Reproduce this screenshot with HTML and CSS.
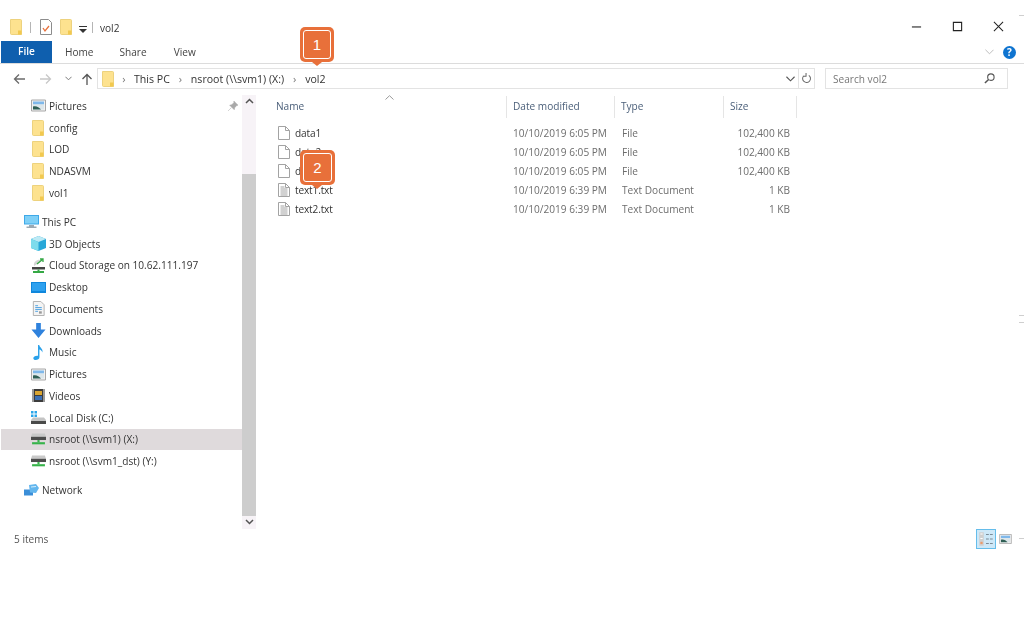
FILE: index.html
```html
<!DOCTYPE html>
<html lang="en">
<head>
    <meta charset="UTF-8">
    <title>vol2</title>
    <link rel="stylesheet" href="styles.css">
</head>
<body>
    <svg class="defs" width="0" height="0">
        <symbol id="folder" viewBox="0 0 12 16">
            <path d="M.5.5h10.2c.4 0 .8.4.8.8v14.2H1.3c-.4 0-.8-.4-.8-.8z" fill="#fde28f" stroke="#edd27e"/>
            <path d="M8 11.5h3.5v4H8z" fill="#f2c94f"/>
        </symbol>
        <symbol id="file" viewBox="0 0 12 14">
            <path d="M.5.5h7l4 4v9H.5z" fill="#fff" stroke="#a3a3a3"/>
            <path d="M7.5.5v4h4" fill="none" stroke="#a3a3a3"/>
        </symbol>
        <symbol id="textfile" viewBox="0 0 12 14">
            <path d="M.5.5h7l4 4v9H.5z" fill="#fff" stroke="#a3a3a3"/>
            <path d="M7.5.5v4h4M2.5 4h4M2.500 6h7M2.500 8h7M2.500 10h7M2.500 12h7" fill="none" stroke="#a3a3a3"/>
        </symbol>
        <symbol id="picture" viewBox="0 0 15 12">
            <path d="M.5.5h14v11H.5z" fill="#f2f2f2" stroke="#a8a8a8"/>
            <path d="M2 2h11v3H2z" fill="#7fb8ea"/>
            <path d="M2 5h11v5H2z" fill="#dce6ea"/>
            <path d="M2 10V7c3-1 6 .5 8 3z" fill="#2f5f55"/>
        </symbol>
        <symbol id="netdrive" viewBox="0 0 14 11">
            <path d="M1 0h12l1 3v2H0V3z" fill="#c9c9c9"/>
            <path d="M0 3h14v3H0z" fill="#4d4d4d"/>
            <path d="M6 6h2v2H6z" fill="#36b34a"/>
            <path d="M1 8h12v2H1z" fill="#36b34a"/>
        </symbol>
    </svg>

    <div class="window">
        <!-- Title bar -->
        <header class="titlebar">
            <svg class="qa-folder"><use href="#folder"/></svg>
            <span class="qa-sep"></span>
            <svg class="qa-props" viewBox="0 0 12 16">
                <path d="M.5.5h8l3 3v12H.5z" fill="#fff" stroke="#8c8c8c"/>
                <path d="M3 9l2 3 4-5" fill="none" stroke="#e8703a" stroke-width="1.3"/>
            </svg>
            <svg class="qa-folder qa-folder2"><use href="#folder"/></svg>
            <svg class="qa-down" viewBox="0 0 8 7"><path d="M0 0h8v1H0zM0 3h8L4 7z" fill="#333"/></svg>
            <span class="qa-sep"></span>
            <span class="title">vol2</span>
            <div class="win-buttons">
                <svg viewBox="0 0 12 12"><path d="M1 6.5h10" stroke="#222" stroke-width="1.2"/></svg>
                <svg viewBox="0 0 12 12"><path d="M1.500 1.500h9v9h-9z" fill="none" stroke="#222" stroke-width="1.2"/></svg>
                <svg viewBox="0 0 12 12"><path d="M1 1l10 10M11 1L1 11" stroke="#222" stroke-width="1.1"/></svg>
            </div>
        </header>

        <!-- Ribbon tabs -->
        <nav class="tabs">
            <a class="tab-file">File</a>
            <a class="tab tab-home">Home</a>
            <a class="tab tab-share">Share</a>
            <a class="tab tab-view">View</a>
            <svg class="ribbon-chevron" viewBox="0 0 10 6"><path d="M.5.5L5 5 9.500.5" fill="none" stroke="#b5b5b5"/></svg>
            <span class="help">?</span>
        </nav>

        <!-- Address row -->
        <div class="addressrow">
            <div class="arrows">
                <svg class="arrow arrow-back" viewBox="0 0 12 12"><path d="M12 6H1.500M6 1.500L1.500 6 6 10.500" fill="none" stroke="#6b6b6b" stroke-width="1.3"/></svg>
                <svg class="arrow arrow-forward" viewBox="0 0 12 12"><path d="M0 6h10.500M6 1.500L10.500 6 6 10.500" fill="none" stroke="#c8c8c8" stroke-width="1.3"/></svg>
                <svg class="arrow-small" viewBox="0 0 8 5"><path d="M.5.5L4 4 7.500.5" fill="none" stroke="#777" stroke-width="1.1"/></svg>
                <svg class="arrow" viewBox="0 0 12 12"><path d="M6 12V1.500M1.500 6L6 1.500 10.500 6" fill="none" stroke="#555" stroke-width="1.3"/></svg>
            </div>
            <div class="addressbar">
                <svg class="crumb-folder"><use href="#folder"/></svg>
                <span class="crumb-sep crumb-sep-first">›</span>
                <span class="crumb">This PC</span>
                <span class="crumb-sep">›</span>
                <span class="crumb">nsroot (\\svm1) (X:)</span>
                <span class="crumb-sep">›</span>
                <span class="crumb">vol2</span>
                <svg class="address-drop" viewBox="0 0 10 6"><path d="M.5.5L5 5 9.500.5" fill="none" stroke="#555" stroke-width="1.2"/></svg>
                <span class="refresh">
                    <svg viewBox="0 0 12 12"><path d="M3 3a4.300 4.300 0 1 0 5.500-.5M5.500 0v3.500H2" fill="none" stroke="#666" stroke-width="1.1"/></svg>
                </span>
            </div>
            <div class="searchbox">
                <span>Search vol2</span>
                <svg viewBox="0 0 12 12"><circle cx="7.5" cy="4.5" r="3.5" fill="none" stroke="#555" stroke-width="1.2"/><path d="M5 7l-4 4" stroke="#555" stroke-width="1.6"/></svg>
            </div>
        </div>

        <div class="main">
            <!-- Navigation pane -->
            <aside class="navpane">
                <ul class="tree">
                    <li class="pinned">
                        <svg class="ico"><use href="#picture"/></svg>Pictures
                        <svg class="pin" viewBox="0 0 12 12"><path d="M7 0l5 5-1.500.5L8 8l-.5 2.500L2 5l2.500-.5L7 2zM4 8l-4 4" fill="#a9a9a9" stroke="#a9a9a9" stroke-width=".6"/></svg>
                    </li>
                    <li><svg class="ico ico-folder"><use href="#folder"/></svg>config</li>
                    <li><svg class="ico ico-folder"><use href="#folder"/></svg>LOD</li>
                    <li><svg class="ico ico-folder"><use href="#folder"/></svg>NDASVM</li>
                    <li><svg class="ico ico-folder"><use href="#folder"/></svg>vol1</li>
                    <li class="root group-start">
                        <svg class="ico" viewBox="0 0 15 13"><path d="M0 0h15v9.500H0z" fill="#3fa9e8"/><path d="M1 1h13v7.500H1z" fill="#7fd0f7"/><path d="M5 10h5v1.500h2.500V13h-10v-1.500H5z" fill="#9ba9b3"/></svg>This PC
                    </li>
                    <li><svg class="ico" viewBox="0 0 15 15"><path d="M7.500 0L15 3v9l-7.500 3L0 12V3z" fill="#27a7d8"/><path d="M7.500 0L15 3 7.500 6 0 3z" fill="#bdeaf5"/><path d="M0 3l7.500 3v9L0 12z" fill="#7ddcec"/></svg>3D Objects</li>
                    <li><svg class="ico" viewBox="0 0 15 15"><path d="M3 8a5 5 0 0 1 8-5z" fill="#d5d5d5"/><path d="M6 6l6-5M9 1h3v3" fill="none" stroke="#35a845" stroke-width="1.3"/><path d="M1 9h13v2.500H1z" fill="#444"/><path d="M6.500 11.500h2V13h-2z" fill="#35a845"/><path d="M2 13h11v2H2z" fill="#35a845"/></svg>Cloud Storage on 10.62.111.197</li>
                    <li><svg class="ico" viewBox="0 0 15 11"><path d="M0 0h15v11H0z" fill="#0f87dc"/><path d="M1 1h13v8H1z" fill="#2ea1ef"/></svg>Desktop</li>
                    <li><svg class="ico" viewBox="0 0 15 16"><path d="M2 .5h8l3.500 3.500v11.500H2z" fill="#f4f4f4" stroke="#aeaeae"/><path d="M4 5h3M4 7h7M4 9h7M4 11h3" stroke="#4a9fe0"/><path d="M8 11h3v2.500H8z" fill="#9a9a9a"/></svg>Documents</li>
                    <li><svg class="ico" viewBox="0 0 15 16"><path d="M5 0h5v7h5l-7.500 9L0 7h5z" fill="#2f82dd"/></svg>Downloads</li>
                    <li><svg class="ico" viewBox="0 0 15 16"><path d="M7 0h1.300c.3 3 4.700 4 3.200 8-.3-2-1.800-3-3-3.300V13c0 1.800-2 3-4 3-1.500 0-2.500-.8-2.500-2 0-1.500 2-2.800 5-2.500z" fill="#2aa1ea"/></svg>Music</li>
                    <li><svg class="ico"><use href="#picture"/></svg>Pictures</li>
                    <li><svg class="ico" viewBox="0 0 15 15"><path d="M1 1h13v13H1z" fill="#3c3c3c"/><path d="M4 3h7v4H4z" fill="#d9a532"/><path d="M4 8h7v4H4z" fill="#3b6fb5"/><path d="M1 1h2v13H1zM12 1h2v13h-2z" fill="#9a9a9a"/></svg>Videos</li>
                    <li><svg class="ico" viewBox="0 0 15 13"><path d="M0 0h2.500v2.500H0zM3.500 0H6v2.500H3.500zM0 3.500h2.500V6H0zM3.500 3.500H6V6H3.500z" fill="#2ba6ea"/><path d="M2 6.500h11L15 9v4H0V9z" fill="#c4c4c4"/><path d="M0 10h15v3H0z" fill="#4a4a4a"/></svg>Local Disk (C:)</li>
                    <li class="selected"><svg class="ico"><use href="#netdrive"/></svg>nsroot (\\svm1) (X:)</li>
                    <li><svg class="ico"><use href="#netdrive"/></svg>nsroot (\\svm1_dst) (Y:)</li>
                    <li class="root group-start">
                        <svg class="ico" viewBox="0 0 15 13"><path d="M0 5.500h9v6H0z" fill="#3b8ed8"/><path d="M5 1l7-1 3 4-3 5-6-.5z" fill="#63b6ee"/><path d="M7 3l5-.5" stroke="#d3eefc"/></svg>Network
                    </li>
                </ul>
            </aside>

            <div class="scrollbar">
                <svg class="scroll-arrow" viewBox="0 0 9 6"><path d="M1 5l3.500-3.500L8 5" fill="none" stroke="#555" stroke-width="1.5"/></svg>
                <div class="scroll-track"><div class="scroll-thumb"></div></div>
                <svg class="scroll-arrow" viewBox="0 0 9 6"><path d="M1 1l3.500 3.500L8 1" fill="none" stroke="#555" stroke-width="1.5"/></svg>
            </div>

            <!-- File list -->
            <section class="filelist">
                <svg class="sort-arrow" viewBox="0 0 9 5"><path d="M.5 4.500L4.500.7l4 3.800" fill="none" stroke="#9a9a9a"/></svg>
                <div class="columns">
                    <div class="col col-name">Name</div>
                    <div class="col col-date">Date modified</div>
                    <div class="col col-type">Type</div>
                    <div class="col col-size">Size</div>
                </div>
                <div class="row">
                    <div class="cell-name"><svg class="file-ico"><use href="#file"/></svg>data1</div>
                    <div class="cell cell-date">10/10/2019 6:05 PM</div>
                    <div class="cell cell-type">File</div>
                    <div class="cell cell-size">102,400 KB</div>
                </div>
                <div class="row">
                    <div class="cell-name"><svg class="file-ico"><use href="#file"/></svg>data2</div>
                    <div class="cell cell-date">10/10/2019 6:05 PM</div>
                    <div class="cell cell-type">File</div>
                    <div class="cell cell-size">102,400 KB</div>
                </div>
                <div class="row">
                    <div class="cell-name"><svg class="file-ico"><use href="#file"/></svg>data3</div>
                    <div class="cell cell-date">10/10/2019 6:05 PM</div>
                    <div class="cell cell-type">File</div>
                    <div class="cell cell-size">102,400 KB</div>
                </div>
                <div class="row">
                    <div class="cell-name"><svg class="file-ico"><use href="#textfile"/></svg>text1.txt</div>
                    <div class="cell cell-date">10/10/2019 6:39 PM</div>
                    <div class="cell cell-type">Text Document</div>
                    <div class="cell cell-size">1 KB</div>
                </div>
                <div class="row">
                    <div class="cell-name"><svg class="file-ico"><use href="#textfile"/></svg>text2.txt</div>
                    <div class="cell cell-date">10/10/2019 6:39 PM</div>
                    <div class="cell cell-type">Text Document</div>
                    <div class="cell cell-size">1 KB</div>
                </div>
            </section>
        </div>

        <!-- Status bar -->
        <footer class="statusbar">
            <span>5 items</span>
            <div class="views">
                <span class="view-details">
                    <svg viewBox="0 0 16 16"><path d="M2 2h4v12H2z" fill="#cfcfcf"/><path d="M3 3.500h2M3 7.500h2" stroke="#fff"/><path d="M3 10.500h2v2H3z" fill="#eb9a6c"/><path d="M8 4h2.500M11.500 4H14M8 8h2.500M11.500 8H14M8 12h2.500M11.500 12H14" stroke="#7a8a96"/></svg>
                </span>
                <svg class="view-large"><use href="#picture"/></svg>
            </div>
        </footer>
    </div>

    <!-- Window edge marks -->
    <span class="edge edge-top"></span>
    <span class="edge edge-mid"></span>
    <span class="edge edge-low"></span>
    <span class="edge edge-status"></span>

    <!-- Callouts -->
    <div class="callout callout-1"><span>1</span></div>
    <div class="callout callout-2"><span>2</span></div>
</body>
</html>
```

FILE: styles.css
```css
body {
    margin: 0;
    background: white;
    font-family: 'Open Sans', 'Noto Sans', sans-serif;
    font-size: 10.1px;
    color: #333;
    overflow: hidden;
}

.defs {
    position: absolute;
}

.window {
    width: 1024px;
    height: 634px;
    filter: blur(0.45px);
}

/* Title bar */
.titlebar {
    height: 41px;
    padding: 19px 0 0 10px;
    box-sizing: border-box;
    display: flex;
    align-items: flex-start;
}

.qa-folder {
    width: 12px;
    height: 16px;
}

.qa-folder2 {
    margin-left: 8px;
}

.qa-sep {
    width: 1px;
    height: 11px;
    margin: 3px 9px 0 8px;
    background: #b5b5b5;
}

.qa-props {
    width: 12px;
    height: 16px;
}

.qa-down {
    width: 8px;
    height: 7px;
    margin: 7px -3px 0 7px;
}

.title {
    line-height: 18px;
    margin-left: -2px;
}

.win-buttons {
    margin-left: auto;
    display: flex;
    gap: 30px;
    padding: 2px 20px 0 0;
}

.win-buttons svg {
    width: 11px;
    height: 11px;
}

/* Ribbon tabs */
.tabs {
    height: 22px;
    display: flex;
    align-items: center;
    border-bottom: 1px solid #dcdcdc;
    padding-left: 1px;
    position: relative;
}

.tab-file {
    width: 51px;
    height: 22px;
    line-height: 21px;
    text-align: center;
    background: #0f5fae;
    color: white;
    font-weight: 600;
}

.tab {
    color: #444;
}

.tab-home { margin-left: 13px; }
.tab-share { margin-left: 26px; }
.tab-view { margin-left: 27px; }

.ribbon-chevron {
    width: 9px;
    height: 6px;
    margin-left: auto;
    margin-right: 9px;
}

.help {
    width: 13px;
    height: 13px;
    margin-right: 8px;
    border-radius: 50%;
    background: #0f74d0;
    color: white;
    font-size: 10px;
    font-weight: 700;
    line-height: 13px;
    text-align: center;
}

/* Address row */
.addressrow {
    height: 31px;
    box-sizing: border-box;
    padding-top: 4px;
    display: flex;
    align-items: flex-start;
}

.arrows {
    width: 97px;
    height: 21px;
    display: flex;
    align-items: center;
    padding-left: 13px;
    box-sizing: border-box;
}

.arrow {
    width: 12px;
    height: 12px;
    flex: none;
}

.arrow-back {
    margin-right: 15px;
}

.arrow-forward {
    margin-right: 13px;
}

.arrow-small {
    width: 7px;
    height: 5px;
    margin-right: 9px;
    flex: none;
}

.addressbar {
    width: 718px;
    height: 21px;
    box-sizing: border-box;
    border: 1px solid #e3e3e3;
    display: flex;
    align-items: center;
    padding-left: 4px;
}

.crumb-folder {
    width: 12px;
    height: 16px;
}

.crumb {
    font-size: 10.6px;
}

.crumb-sep {
    width: 21px;
    text-align: center;
    color: #777;
    font-size: 11px;
}

.crumb-sep-first {
    width: 20px;
}

.address-drop {
    width: 9px;
    height: 6px;
    margin-left: auto;
    margin-right: 3px;
}

.refresh {
    width: 15px;
    height: 19px;
    border-left: 1px solid #e3e3e3;
    display: flex;
    align-items: center;
    justify-content: center;
}

.refresh svg {
    width: 11px;
    height: 11px;
}

.searchbox {
    width: 183px;
    height: 21px;
    margin-left: 10px;
    box-sizing: border-box;
    border: 1px solid #e3e3e3;
    display: flex;
    align-items: center;
    justify-content: space-between;
    padding: 0 12px 0 7px;
    color: #777;
}

.searchbox svg {
    width: 11px;
    height: 11px;
}

/* Main area */
.main {
    height: 434px;
    display: flex;
}

.navpane {
    width: 242px;
}

.tree {
    list-style: none;
    margin: 0;
    padding: 0;
}

.tree li {
    height: 21.75px;
    display: flex;
    align-items: center;
    padding-left: 30px;
    margin-left: 1px;
    box-sizing: border-box;
}

.tree li.root {
    padding-left: 23px;
}

.tree li.group-start {
    margin-top: 7.25px;
}

.tree li.selected {
    background: #dfdadc;
}

.ico {
    width: 15px;
    height: 15px;
    margin-right: 3px;
    flex: none;
}

.ico-folder {
    width: 12px;
    height: 16px;
    margin: 0 5px 0 1px;
}

.pin {
    width: 10px;
    height: 10px;
    margin-left: auto;
    margin-right: 4px;
}

.scrollbar {
    width: 14px;
    display: flex;
    flex-direction: column;
    align-items: center;
    background: #f7f3f7;
}

.scroll-arrow {
    width: 9px;
    height: 6px;
    margin: 3px 0 4px;
    flex: none;
}

.scroll-track {
    flex: 1;
    width: 100%;
    padding-top: 66px;
    box-sizing: border-box;
}

.scroll-thumb {
    height: 100%;
    background: #cdcdcd;
}

/* File list */
.filelist {
    flex: 1;
    position: relative;
}

.sort-arrow {
    position: absolute;
    left: 129px;
    top: 0;
    width: 9px;
    height: 5px;
}

.columns {
    display: flex;
    height: 28px;
    padding-top: 1px;
    box-sizing: border-box;
    color: #4c607a;
}

.col {
    height: 22px;
    line-height: 21px;
    border-right: 1px solid #e5e5e5;
    box-sizing: border-box;
    padding-left: 6px;
}

.col-name { width: 251px; padding-left: 20px; }
.col-date { width: 108px; }
.col-type { width: 109px; }
.col-size { width: 73px; }

.row {
    display: flex;
    height: 19px;
    align-items: center;
    color: #6d6d6d;
}

.cell-name {
    width: 251px;
    display: flex;
    align-items: center;
    padding-left: 22px;
    box-sizing: border-box;
    color: #333;
    letter-spacing: -0.15px;
}

.file-ico {
    width: 12px;
    height: 14px;
    margin-right: 5px;
}

.cell {
    box-sizing: border-box;
    padding-left: 6px;
}

.cell-date { width: 108px; }
.cell-type { width: 109px; padding-left: 7px; }
.cell-size { width: 66px; text-align: right; }

/* Status bar */
.statusbar {
    height: 20px;
    padding: 0 12px 0 14px;
    display: flex;
    align-items: center;
    justify-content: space-between;
    color: #555;
}

.views {
    display: flex;
    align-items: center;
    gap: 3px;
}

.view-details {
    width: 20px;
    height: 20px;
    box-sizing: border-box;
    border: 1px solid #65bdeb;
    background: #cde8f8;
}

.view-details svg {
    width: 18px;
    height: 18px;
    display: block;
}

.view-large {
    width: 13px;
    height: 10px;
}

/* Edge marks */
.edge {
    position: absolute;
    height: 1px;
    background: #cfcfcf;
    right: 0;
    width: 5px;
}

.edge-top { top: 15px; }
.edge-mid { top: 315px; }
.edge-low { top: 322px; }
.edge-status { top: 538px; }

/* Callouts */
.callout {
    position: absolute;
    width: 34px;
    height: 35px;
    box-sizing: border-box;
    padding: 3px;
    background: #e8703a;
    border-radius: 5px;
}

.callout span {
    display: block;
    height: 100%;
    border: 1px solid #fff;
    border-radius: 3px;
    box-sizing: border-box;
    color: white;
    font-family: 'Liberation Sans', sans-serif;
    font-size: 15px;
    line-height: 27px;
    text-align: center;
}

.callout::after {
    content: "";
    position: absolute;
    left: 12px;
    bottom: -4px;
    border-left: 5px solid transparent;
    border-right: 5px solid transparent;
    border-top: 4px solid #e8703a;
}

.callout-1 {
    left: 300px;
    top: 27px;
}

.callout-2 {
    left: 300px;
    top: 150px;
    width: 35px;
}
```
